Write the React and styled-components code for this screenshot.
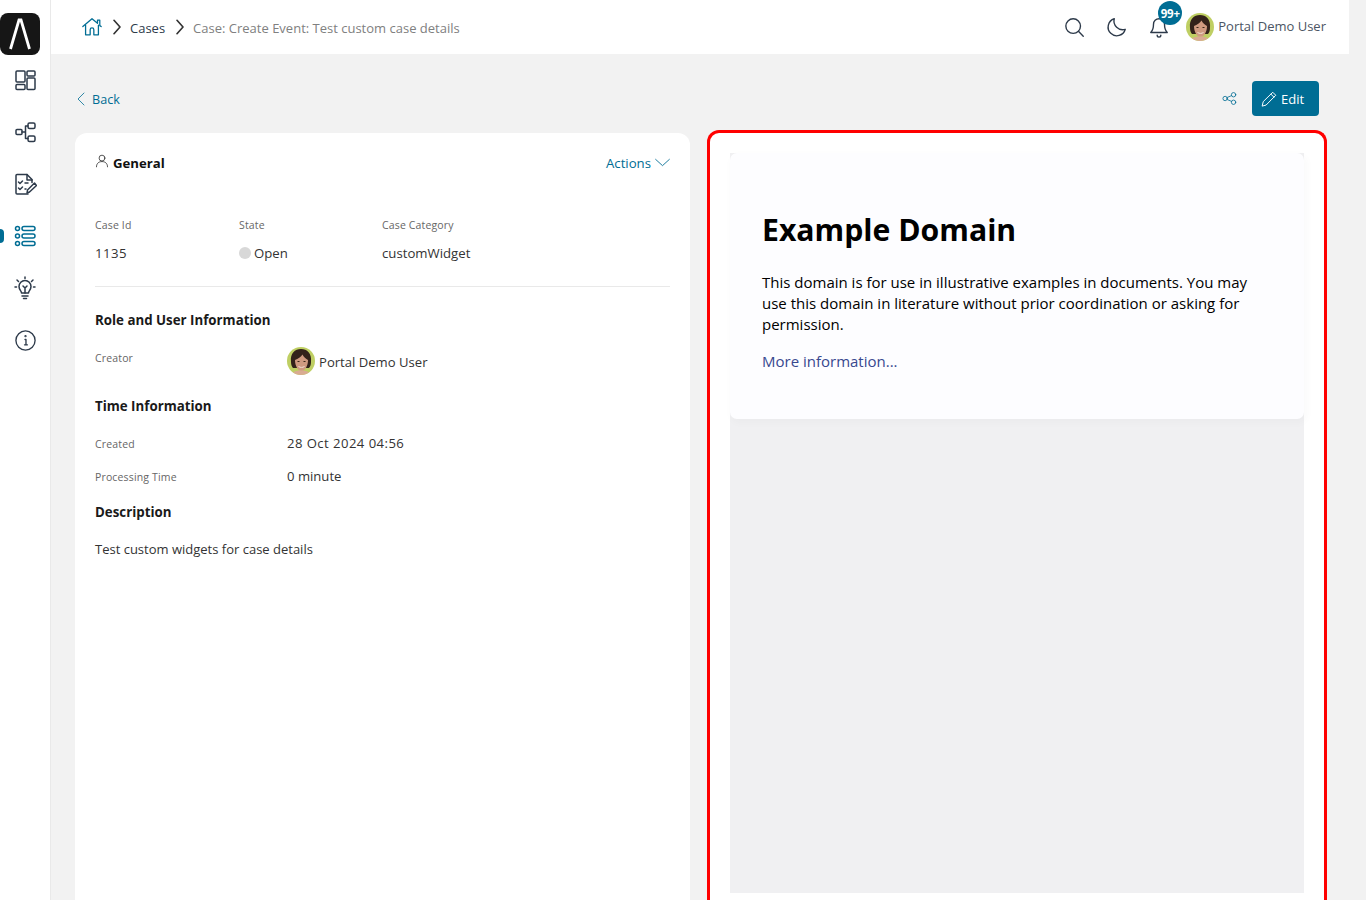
import React from 'react';
import styled, { createGlobalStyle } from 'styled-components';

const Global = createGlobalStyle`
  html, body { margin: 0; padding: 0; height: 900px; overflow: hidden; background: #f2f2f2; }
  body { font-family: "Open Sans", "Noto Sans", sans-serif; color: #212529; }
  * { box-sizing: border-box; }
`;
const teal = '#006d94';
const Shell = styled.div`display: flex; width: 1366px; height: 900px; overflow: hidden;`;
const Sidebar = styled.aside`
  width: 51px; flex: none; background: #fff; border-right: 1px solid #e9e9e9;
  display: flex; flex-direction: column; align-items: center; padding-top: 13px; position: relative;
`;
const Logo = styled.div`
  width: 40px; height: 42px; margin-left: -10px; background: #161616; border-radius: 8px;
  display: flex; align-items: center; justify-content: center;
`;
const NavItem = styled.a`
  width: 50px; height: 52px; display: flex; align-items: center; justify-content: center;
  color: ${p => p.$active ? teal : '#2d3a4a'}; position: relative;
`;
const NavList = styled.nav`display: flex; flex-direction: column; margin-top: -1px;`;
const ActiveMark = styled.span`
  position: absolute; left: 0; top: 19px; width: 4px; height: 14px; background: ${teal};
  border-radius: 0 4px 4px 0;
`;
const Main = styled.div`flex: 1; min-width: 0; display: flex; flex-direction: column;`;
const Topbar = styled.header`
  width: 1298px; height: 54px; flex: none; background: #fff; display: flex; align-items: center;
  justify-content: space-between; padding: 0 23px 0 30px;
`;
const Crumbs = styled.div`display: flex; align-items: center; font-size: 13px; color: #2d3a4a;`;
const CrumbText = styled.span`padding-top: 2px;`;
const CrumbLast = styled(CrumbText)`color: #808080; font-size: 13px;`;
const CrumbSep = styled.span`display: flex; width: 18px; justify-content: center; color: #333; margin: 0 ${p => p.$after}px 0 ${p => p.$before}px;`;
const HomeIcon = styled.span`display: flex; color: ${teal};`;
const TopActions = styled.div`display: flex; align-items: center; color: #2d3a4a;`;
const IconBtn = styled.span`display: flex; width: 42px; justify-content: center; position: relative;`;
const Badge = styled.span`
  position: absolute; left: 20px; top: -15px; width: 24px; height: 24px; border-radius: 50%;
  background: ${teal}; color: #fff; font-size: 11.500px; font-weight: 700; display: flex;
  align-items: center; justify-content: center; letter-spacing: -.2px;
`;
const UserName = styled.span`font-size: 13px; color: #4b5563; margin: -2px 0 0 4px;`;
const UserRow = styled.div`display: flex; align-items: center; margin-left: 6px;`;
const Content = styled.div`flex: 1; padding: 27px 0 0 24px; width: 1298px;`;
const ActionBar = styled.div`
  display: flex; align-items: center; justify-content: space-between; height: 35px; width: 1244px;
`;
const Back = styled.a`display: flex; align-items: center; gap: 2px; color: ${teal}; font-size: 12.600px; margin-left: -1px; padding-top: 1px;`;
const RightActions = styled.div`display: flex; align-items: center; gap: 15px;`;
const ShareIcon = styled.span`display: flex; color: ${teal};`;
const EditBtn = styled.button`
  width: 67px; height: 35px; background: ${teal}; color: #fff; border: 0; border-radius: 4px;
  font: 13px "Open Sans", sans-serif; display: flex; align-items: center; justify-content: flex-start; gap: 3px;
  padding: 0 0 0 8px;
`;
const Columns = styled.div`display: flex; align-items: flex-start; margin-top: 14px;`;
const Card = styled.section`
  width: 615px; height: 800px; margin-top: 3px; flex: none; background: #fff; border-radius: 12px; padding: 20px 20px;
`;
const CardHead = styled.div`display: flex; justify-content: space-between; align-items: center; height: 21px;`;
const CardTitle = styled.h2`margin: -2px 0 0; display: flex; align-items: center; gap: 4px; font-size: 13.200px; font-weight: 700; color: #111;`;
const PersonIcon = styled.span`display: flex; margin-top: -4px;`;
const ActionsLink = styled.a`display: flex; align-items: center; gap: 4px; font-size: 13.200px; color: ${teal}; margin-top: -2px;`;
const Summary = styled.div`
  display: grid; grid-template-columns: 144px 143px 1fr; margin-top: 43px; padding-bottom: 23px;
  border-bottom: 1px solid #e9e9e9;
`;
const Label = styled.div`
  font-size: 10.500px; color: #666; line-height: 16px; letter-spacing: .15px;
  margin: ${p => p.$shift || 0}px 0 0;
`;
const CreatorLabel = styled(Label)`margin: 0 0 6px;`;
const Value = styled.div`
  font-size: 13.200px; color: #333; line-height: 20px; margin-top: 10px; display: flex; align-items: center; gap: 3px;
  letter-spacing: ${p => p.$spacing || 0}px;
`;
const Dot = styled.span`width: 12px; height: 12px; border-radius: 50%; background: #d8d8d8;`;
const SectionTitle = styled.h3`margin: ${p => p.$top}px 0 0; font-size: 13.300px; line-height: 20px; font-weight: 700; color: #1a1a1a;`;
const InfoRow = styled.div`display: grid; grid-template-columns: 192px 1fr; align-items: center; margin-top: ${p => p.$top}px;`;
const InfoValue = styled.div`
  font-size: 13.100px; color: #333; line-height: 20px; display: flex; align-items: center; gap: 4px;
  letter-spacing: ${p => p.$spacing || 0}px;
`;
const InfoText = styled.span`padding-top: 2px;`;
const Desc = styled.p`margin: 17px 0 0; font-size: 13px; line-height: 20px; color: #333;`;
const Frame = styled.section`
  width: 620px; height: 820px; margin-left: 17px; flex: none; background: #fff; border: 3px solid #f00;
  border-bottom-width: 0; border-radius: 12px 12px 0 0; padding: 20px;
`;
const FrameBody = styled.div`height: 740px; background: #f0f0f2;`;
const Domain = styled.div`
  height: 266px; background: #fdfdff; border-radius: 7px; padding: 59px 32px 0;
  box-shadow: 2px 3px 7px 2px rgba(0,0,0,.02); font-size: 15px; line-height: 21px; color: #000;
`;
const DomainTitle = styled.h1`margin: 0; font-size: 30.200px; line-height: 36px; font-weight: 700; color: #000;`;
const DomainText = styled.p`margin: 24px 0 16px;`;
const DomainLink = styled.a`color: #38488f;`;

const I = ({ children, s = 24, w = 1.5, vb = 24 }) => (
  <svg width={s} height={s} viewBox={`0 0 ${vb} ${vb}`} fill="none" stroke="currentColor" strokeWidth={w} strokeLinecap="round" strokeLinejoin="round">{children}</svg>
);
const Avatar = () => (
  <svg width="28" height="28" viewBox="0 0 28 28">
    <circle cx="14" cy="14" r="14" fill="#bfcf63" />
    <path d="M4 15C3 6 8 2 14 2s11 4 10 13c0 3-1 5-2 6H6c-1-1-2-3-2-6z" fill="#33221a" />
    <path d="M8 13c3-1 6-3 7.500-5.500C16.500 10 19 12 21 13c0 6-3 11-6.500 11S8 19 8 13z" fill="#cf9a80" />
    <path d="M6 25.500C8 24 11 23.500 14 23.500s6 .5 8 2A14 14 0 0 1 6 25.500z" fill="#d9ab92" />
    <path d="M11.500 19.500c2 1.200 4 1.200 6 0" stroke="#f2e2d8" strokeWidth="1" fill="none" />
    <path d="M10.500 14.500h2M16.500 14.500h2" stroke="#3a2618" strokeWidth="1" />
  </svg>
);

export default function App() {
  return (
    <Shell>
      <Global />
      <Sidebar>
        <Logo>
          <svg width="26" height="34" viewBox="0 0 26 34" fill="none" stroke="#fff" strokeWidth="2.800"><path d="M3.500 32 12 3h2L22.500 32" /></svg>
        </Logo>
        <NavList>
          <NavItem>
            <I><rect x="3" y="3" width="9" height="11" rx="1" /><rect x="3" y="16.500" width="9" height="5" rx="1" /><rect x="14" y="3" width="8" height="5" rx="1" /><rect x="14" y="10" width="8" height="11.500" rx="1" /></I>
          </NavItem>
          <NavItem>
            <I><rect x="3" y="9.500" width="6" height="5" rx="1" /><rect x="15" y="3" width="7" height="5.500" rx="1.500" /><rect x="15" y="16" width="7" height="5.500" rx="1.500" /><path d="M9 12h3.500M12.500 6v12.500M12.500 6H15M12.500 18.500H15" /></I>
          </NavItem>
          <NavItem>
            <I><path d="M15 22H4a1 1 0 0 1-1-1V3.500a1 1 0 0 1 1-1h10l5 5v3" /><path d="M14 2.500V8h5" /><path d="m5.500 10 1.500 1.500 2.500-2.500M5.500 16l1.500 1.500 2.500-2.500M12 11h3M12 17h1" /><path d="m14 21 .5-3 7-7 2 2.500-7 6.500z" /></I>
          </NavItem>
          <NavItem $active>
            <ActiveMark />
            <I><circle cx="4.500" cy="4.500" r="2" /><circle cx="4.500" cy="12" r="2" /><circle cx="4.500" cy="19.500" r="2" /><rect x="9" y="2.500" width="13" height="4" rx="2" /><rect x="9" y="10" width="13" height="4" rx="2" /><rect x="9" y="17.500" width="13" height="4" rx="2" /></I>
          </NavItem>
          <NavItem>
            <I><path d="M8.500 17c0-2-2.500-3-2.500-6.500a6 6 0 0 1 12 0C18 14 15.500 15 15.500 17z" /><path d="M9 20h6M10.500 22.500h3M10 10l2 2 2-2M12 12v5M12 1v1.500M4 4l1.500 1.500M20 4l-1.500 1.500M2 11h1.500M20.500 11H22" /></I>
          </NavItem>
          <NavItem>
            <I s={23} w={1.400}><circle cx="12" cy="12" r="10" /><path d="M11.500 11h1v5.500M11 16.500h3" /><circle cx="12" cy="7.500" r=".5" /></I>
          </NavItem>
        </NavList>
      </Sidebar>
      <Main>
        <Topbar>
          <Crumbs>
            <HomeIcon>
              <I s={22} w={1.400}><path d="M2 11.500 12 3l6 5V4.500h2.500V10.500L22 11.500" /><path d="M5 10v10.500h5V15a2 2 0 0 1 4 0v5.500h5V10" /></I>
            </HomeIcon>
            <CrumbSep $before={5} $after={4}><I s={18} w={2.200}><path d="m8 3 8 9-8 9" /></I></CrumbSep>
            <CrumbText>Cases</CrumbText>
            <CrumbSep $before={6} $after={4}><I s={18} w={2.200}><path d="m8 3 8 9-8 9" /></I></CrumbSep>
            <CrumbLast>Case: Create Event: Test custom case details</CrumbLast>
          </Crumbs>
          <TopActions>
            <IconBtn><I s={22}><circle cx="10" cy="11" r="8" /><path d="m16 17 5 5" /></I></IconBtn>
            <IconBtn><I s={22}><path d="M21 14.500A9.500 9.500 0 0 1 9 3a9.500 9.500 0 1 0 12 11.500z" /></I></IconBtn>
            <IconBtn>
              <I s={22}><path d="M6 9a6 6 0 0 1 12 0c0 6 2 8 3 9H3c1-1 3-3 3-9z" /><path d="M10 21a2 2 0 0 0 4 0" /></I>
              <Badge>99+</Badge>
            </IconBtn>
            <UserRow><Avatar /><UserName>Portal Demo User</UserName></UserRow>
          </TopActions>
        </Topbar>
        <Content>
          <ActionBar>
            <Back><I s={16} w={1.200}><path d="m15 3-9 9 9 9" /></I>Back</Back>
            <RightActions>
              <ShareIcon>
                <I s={15} w={1.300}><circle cx="5" cy="12" r="3.500" /><circle cx="18.500" cy="6" r="3.500" /><circle cx="18.500" cy="18" r="3.500" /><path d="m8 10.500 7-3M8 13.500l7 3" /></I>
              </ShareIcon>
              <EditBtn><I s={18} w={1.300}><path d="M3 21l1.300-5.500L17 3l4 4L8.500 19.700z" /><path d="m14.500 5.500 4 4" /></I>Edit</EditBtn>
            </RightActions>
          </ActionBar>
          <Columns>
            <Card>
              <CardHead>
                <CardTitle>
                  <PersonIcon><I s={14} w={1.200}><circle cx="12" cy="7" r="5" /><path d="M2.500 22c0-6 4-9 9.500-9s9.500 3 9.500 9" /></I></PersonIcon>
                  General
                </CardTitle>
                <ActionsLink>Actions<I s={15} w={1.400}><path d="m1 7 11 10L23 7" /></I></ActionsLink>
              </CardHead>
              <Summary>
                <div><Label>Case Id</Label><Value $spacing={0.5}>1135</Value></div>
                <div><Label>State</Label><Value><Dot />Open</Value></div>
                <div><Label>Case Category</Label><Value>customWidget</Value></div>
              </Summary>
              <SectionTitle $top={23}>Role and User Information</SectionTitle>
              <InfoRow $top={17}><CreatorLabel>Creator</CreatorLabel><InfoValue><Avatar /><InfoText>Portal Demo User</InfoText></InfoValue></InfoRow>
              <SectionTitle $top={21}>Time Information</SectionTitle>
              <InfoRow $top={17}><Label $shift={2}>Created</Label><InfoValue $spacing={0.45}>28 Oct 2024 04:56</InfoValue></InfoRow>
              <InfoRow $top={13}><Label $shift={2}>Processing Time</Label><InfoValue>0 minute</InfoValue></InfoRow>
              <SectionTitle $top={16}>Description</SectionTitle>
              <Desc>Test custom widgets for case details</Desc>
            </Card>
            <Frame>
              <FrameBody>
                <Domain>
                  <DomainTitle>Example Domain</DomainTitle>
                  <DomainText>This domain is for use in illustrative examples in documents. You may use this domain in literature without prior coordination or asking for permission.</DomainText>
                  <DomainLink>More information...</DomainLink>
                </Domain>
              </FrameBody>
            </Frame>
          </Columns>
        </Content>
      </Main>
    </Shell>
  );
}
